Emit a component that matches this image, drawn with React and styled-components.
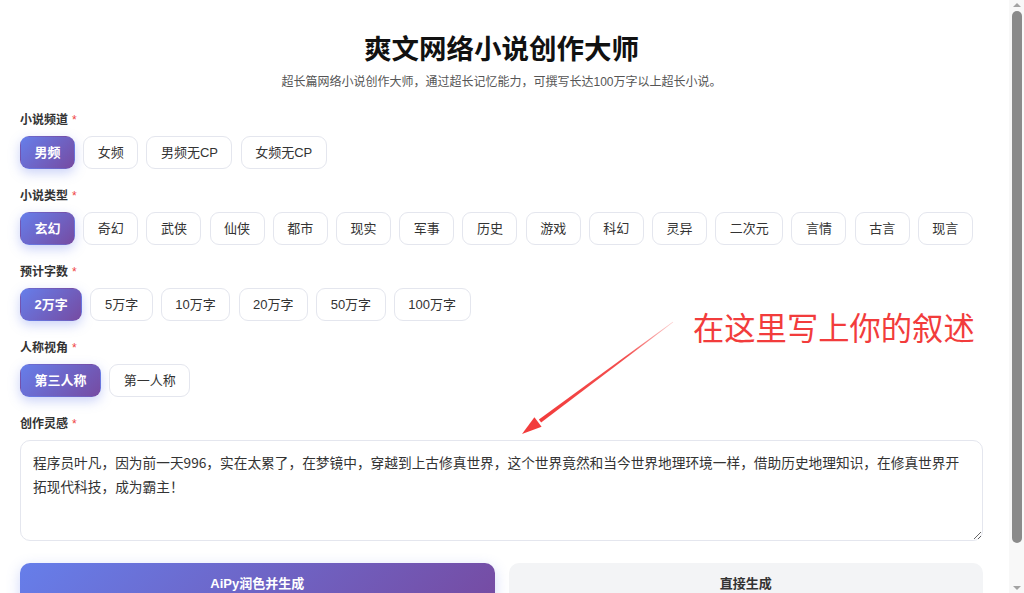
import React, { useState } from 'react';
import styled, { createGlobalStyle } from 'styled-components';

const GlobalStyle = createGlobalStyle`
  html, body {
    margin: 0;
    padding: 0;
    background: #ffffff;
  }
  body {
    font-family: "Liberation Sans", "Noto Sans CJK SC", sans-serif;
    color: #333;
  }
`;

const Page = styled.div`
  position: relative;
  padding: 33px 41px 22px 20px;
`;

const Title = styled.h1`
  margin: 0;
  text-align: center;
  font-size: 27.5px;
  line-height: 34px;
  font-weight: 700;
  color: #111;
`;

const Subtitle = styled.p`
  margin: 6px 0 0;
  text-align: center;
  font-size: 12px;
  line-height: 18px;
  color: #555;
`;

const Form = styled.div`
  margin-top: 20px;
  display: flex;
  flex-direction: column;
`;

const Section = styled.div`
  display: flex;
  flex-direction: column;
  gap: 7px;
  margin-bottom: ${(p) => (p.last ? '22px' : '18px')};
`;

const Label = styled.div`
  font-size: 12px;
  line-height: 18px;
  font-weight: 700;
  color: #333;
`;

const Star = styled.span`
  color: #ef4444;
  margin-left: 4px;
  font-weight: 400;
`;

const ChipRow = styled.div`
  display: flex;
  flex-wrap: wrap;
  gap: 8.2px;
`;

const Chip = styled.button`
  font-family: inherit;
  font-size: 13px;
  line-height: 18px;
  padding: 6.5px 13.5px;
  border-radius: 9px;
  cursor: pointer;
  border: 1.5px solid ${(p) => (p.active ? 'transparent' : '#e4e6ee')};
  background: ${(p) => (p.active ? 'linear-gradient(135deg, #667eea 0%, #764ba2 100%)' : '#fff')};
  color: ${(p) => (p.active ? '#fff' : '#333')};
  font-weight: ${(p) => (p.active ? 700 : 400)};
  box-shadow: ${(p) => (p.active ? '0 4px 12px rgba(102, 126, 234, 0.35)' : 'none')};
`;

const Inspiration = styled.textarea`
  box-sizing: border-box;
  width: 100%;
  height: 101px;
  padding: 9px 12px;
  font-family: "Noto Sans CJK SC", sans-serif;
  font-size: 13.7px;
  line-height: 24px;
  color: #333;
  border: 1.5px solid #e4e6ee;
  border-radius: 10px;
  outline: none;
  resize: vertical;
`;

const Actions = styled.div`
  display: grid;
  grid-template-columns: 1fr 1fr;
  gap: 14px;
`;

const ActionButton = styled.button`
  font-family: inherit;
  font-size: 13px;
  font-weight: 700;
  line-height: 18px;
  padding: 12px 0;
  border: none;
  border-radius: 10px;
  cursor: pointer;
  color: ${(p) => (p.primary ? '#fff' : '#333')};
  background: ${(p) => (p.primary ? 'linear-gradient(135deg, #667eea 0%, #764ba2 100%)' : '#f3f4f6')};
  box-shadow: ${(p) => (p.primary ? '0 4px 14px rgba(102, 126, 234, 0.3)' : 'none')};
`;

const Note = styled.div`
  position: absolute;
  left: 693px;
  top: 311px;
  font-family: "Noto Sans CJK SC", sans-serif;
  font-size: 31.3px;
  line-height: 1;
  color: #f23c3c;
  white-space: nowrap;
`;

const ArrowLayer = styled.svg`
  position: absolute;
  left: 0;
  top: 0;
  pointer-events: none;
`;

/* browser scrollbar as seen in the capture */
const ScrollTrack = styled.div`
  position: fixed;
  top: 0;
  right: 0;
  width: 15px;
  height: 100vh;
  background: #f8f8f8;
  display: flex;
  flex-direction: column;
  align-items: center;
  justify-content: space-between;
  padding: 3px 0;
  box-sizing: border-box;
`;

const ScrollArrow = styled.div`
  width: 0;
  height: 0;
  border-left: 4px solid transparent;
  border-right: 4px solid transparent;
  ${(p) => (p.down ? 'border-top: 4px solid #a3a3a3;' : 'border-bottom: 4px solid #a3a3a3;')}
`;

const ScrollThumb = styled.div`
  width: 10px;
  height: 532px;
  margin-bottom: auto;
  margin-top: 4px;
  border-radius: 5px;
  background: #8a8a8a;
`;

const channels = ['男频', '女频', '男频无CP', '女频无CP'];
const genres = ['玄幻', '奇幻', '武侠', '仙侠', '都市', '现实', '军事', '历史', '游戏', '科幻', '灵异', '二次元', '言情', '古言', '现言'];
const lengths = ['2万字', '5万字', '10万字', '20万字', '50万字', '100万字'];
const views = ['第三人称', '第一人称'];

const idea = '程序员叶凡，因为前一天996，实在太累了，在梦镜中，穿越到上古修真世界，这个世界竟然和当今世界地理环境一样，借助历史地理知识，在修真世界开拓现代科技，成为霸主！';

function Choice({ label, options, value, onPick }) {
  return (
    <Section>
      <Label>
        {label}
        <Star>*</Star>
      </Label>
      <ChipRow>
        {options.map((o) => (
          <Chip key={o} active={o === value} onClick={() => onPick(o)}>
            {o}
          </Chip>
        ))}
      </ChipRow>
    </Section>
  );
}

export default function App() {
  const [channel, setChannel] = useState('男频');
  const [genre, setGenre] = useState('玄幻');
  const [length, setLength] = useState('2万字');
  const [view, setView] = useState('第三人称');

  return (
    <Page>
      <GlobalStyle />
      <Title>爽文网络小说创作大师</Title>
      <Subtitle>超长篇网络小说创作大师，通过超长记忆能力，可撰写长达100万字以上超长小说。</Subtitle>
      <Form>
        <Choice label="小说频道" options={channels} value={channel} onPick={setChannel} />
        <Choice label="小说类型" options={genres} value={genre} onPick={setGenre} />
        <Choice label="预计字数" options={lengths} value={length} onPick={setLength} />
        <Choice label="人称视角" options={views} value={view} onPick={setView} />
        <Section last>
          <Label>
            创作灵感
            <Star>*</Star>
          </Label>
          <Inspiration defaultValue={idea} />
        </Section>
        <Actions>
          <ActionButton primary>AiPy润色并生成</ActionButton>
          <ActionButton>直接生成</ActionButton>
        </Actions>
      </Form>

      <Note>在这里写上你的叙述</Note>
      <ArrowLayer width="1009" height="593" viewBox="0 0 1009 593">
        <defs>
          <linearGradient id="shaft" x1="673" y1="322" x2="540" y2="421" gradientUnits="userSpaceOnUse">
            <stop offset="0" stopColor="#f23c3c" stopOpacity="0.25" />
            <stop offset="0.35" stopColor="#f23c3c" stopOpacity="0.9" />
            <stop offset="1" stopColor="#f23c3c" />
          </linearGradient>
        </defs>
        <polygon points="673.2,322.2 672.8,321.8 538.9,419.6 541.1,422.4" fill="url(#shaft)" />
        <polygon points="522,434 534.4,417.2 541.6,426.8" fill="#f23c3c" />
      </ArrowLayer>

      <ScrollTrack>
        <ScrollArrow />
        <ScrollThumb />
        <ScrollArrow down />
      </ScrollTrack>
    </Page>
  );
}
